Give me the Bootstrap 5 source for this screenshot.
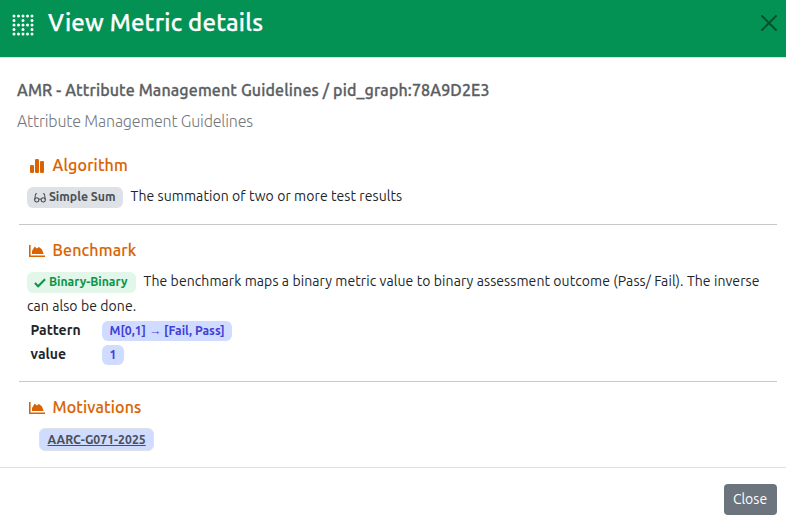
<!DOCTYPE html>
<html lang="en">
<head>
<meta charset="utf-8">
<meta name="viewport" content="width=device-width, initial-scale=1">
<title>View Metric details</title>
<link href="https://cdn.jsdelivr.net/npm/bootstrap@5.3.0/dist/css/bootstrap.min.css" rel="stylesheet">
<style>
body{font-family:Ubuntu,"Noto Sans",sans-serif;font-size:14px;line-height:24px;color:#212529;overflow:hidden}
.dialog{height:523px}
.dialog-head{height:58px;background:#039254;border-bottom:1px solid #dee2e6;padding:5px 8px 0 12px}
.dialog-title{font-size:24px;font-weight:500;line-height:36px;margin-left:14px;letter-spacing:.2px;-webkit-text-stroke:.25px currentColor}
.close-icon{margin-top:10px}
.dialog-body{height:409px;padding:20px 9px 0 17px}
.metric-name{font-size:16px;font-weight:500;line-height:24px;color:#5b5e62;letter-spacing:.135px;-webkit-text-stroke:.3px currentColor}
.metric-label{font-size:16px;font-weight:200;line-height:24px;color:#75787c;margin-top:7px;letter-spacing:-.17px}
.section{margin-left:2px;padding:0 8px}
.section-algorithm{margin-top:20px;height:71px}
.section-benchmark{padding-top:13px;height:156px}
.section-motivations{padding-top:13px}
.section-title{font-size:16px;font-weight:500;line-height:24px;color:#d96302;padding-left:2px;letter-spacing:.16px;-webkit-text-stroke:.12px currentColor}
.section-title svg{margin-right:7.5px;margin-top:2px}
.section-text{margin-top:7px;line-height:25px;letter-spacing:.08px}
.divider{border-top:1px solid #c7c8ca;margin-left:2px}
.tag{display:inline-block;border-radius:6px;font-size:12.25px;font-weight:700;line-height:20px;height:20px;padding:0 7.5px;white-space:nowrap;vertical-align:top;letter-spacing:0}
.tag svg{vertical-align:-3px}
.section-text .tag{margin-top:3px;height:21px}
.tag-gray{background:#dee2e6;color:#495057;padding:0 7px}
.tag-green{background:#e2f6e9;color:#0a9447;padding:0 8.2px 0 7px}
.tag-blue{background:#d0dcff;color:#4340d6;margin-top:2px}
.tag-link{background:#d0dcff;color:#495057;border:1px solid #dee2e6;height:23px;line-height:21px}
.tag-link:hover{color:#343a40}
.motivation-list{padding:9px 0 0 12px}
.term{width:75px;padding-left:3.5px;font-weight:700;margin-top:-1px}
.dialog-foot{height:56px;border-top:1px solid #dee2e6;padding:16px 9px 0}
.btn-close-dialog{width:53px;height:31px;padding:0 1px 0 0;font-size:14px;border-radius:4px;background:#6c757d;color:#fff}
</style>
</head>
<body>
<div class="dialog d-flex flex-column bg-white">
  <header class="dialog-head d-flex align-items-start">
    <svg class="mt-2" width="22" height="24" viewBox="0 0 22 24" fill="none" stroke="#fff" stroke-width="3" stroke-linecap="round"><path d="M2 3h18.1M2 12h18.1M2 21h18.1" stroke-dasharray="0 4.5"/><path d="M2 7.5h18.1M2 16.5h18.1" stroke-dasharray="0 9"/></svg>
    <h1 class="dialog-title text-white mb-0">View Metric details</h1>
    <button type="button" class="btn p-0 border-0 ms-auto lh-1" aria-label="Close dialog"><svg class="close-icon d-block" width="18" height="17" viewBox="0 0 18 17" stroke="#024e2d" stroke-width="1.8" stroke-linecap="round"><path d="m2 1 14 14M16 1 2 15"/></svg></button>
  </header>
  <main class="dialog-body">
    <div class="metric-name">AMR - Attribute Management Guidelines / pid_graph:78A9D2E3</div>
    <div class="metric-label">Attribute Management Guidelines</div>

    <section class="section section-algorithm">
      <h2 class="section-title d-flex align-items-center mb-0"><svg width="16" height="16" viewBox="0 0 16 16" fill="currentColor"><rect x="1" y="7" width="4" height="8" rx="1.2"/><rect x="6" y="1" width="4" height="14" rx="1.2"/><rect x="11" y="3" width="4" height="12" rx="1.2"/></svg>Algorithm</h2>
      <div class="section-text"><span class="tag tag-gray me-2"><svg width="12" height="13" viewBox="0 0 13 13" fill="none" stroke="currentColor" stroke-width="1.1"><circle cx="3" cy="9" r="2.3"/><circle cx="10" cy="9" r="2.3"/><path d="M5.2 8.5q1.3-.9 2.6 0M.8 8.8 1.6 3q.3-.9 1.7-.6M12.2 8.8 11.4 3q-.3-.9-1.7-.6"/></svg> Simple Sum</span>The summation of two or more test results</div>
    </section>
    <div class="divider"></div>

    <section class="section section-benchmark">
      <h2 class="section-title d-flex align-items-center mb-0"><svg width="16" height="16" viewBox="0 0 16 16" fill="currentColor"><path d="M0 2h1.6v10.4H16V14H0zM3 11V8l2.7-4.5 2 2L10 4l3 2.5 1.6 4.5z"/></svg>Benchmark</h2>
      <div class="section-text"><span class="tag tag-green me-2"><svg width="12" height="13" viewBox="0 0 13 13" fill="none" stroke="currentColor" stroke-width="2.2"><path d="m1 7 3.5 3.5L12 3"/></svg> Binary-Binary</span>The benchmark maps a binary metric value to binary assessment outcome (Pass/ Fail). The inverse can also be done.</div>
      <div class="d-flex"><div class="term">Pattern</div><div><span class="tag tag-blue">M[0,1] → [Fail, Pass]</span></div></div>
      <div class="d-flex"><div class="term">value</div><div><span class="tag tag-blue">1</span></div></div>
    </section>
    <div class="divider"></div>

    <section class="section section-motivations">
      <h2 class="section-title d-flex align-items-center mb-0"><svg width="16" height="16" viewBox="0 0 16 16" fill="currentColor"><path d="M0 2h1.6v10.4H16V14H0zM3 11V8l2.7-4.5 2 2L10 4l3 2.5 1.6 4.5z"/></svg>Motivations</h2>
      <div class="motivation-list"><a href="#" class="tag tag-link">AARC-G071-2025</a></div>
    </section>
  </main>
  <footer class="dialog-foot d-flex justify-content-end align-items-start">
    <button type="button" class="btn btn-close-dialog">Close</button>
  </footer>
</div>
</body>
</html>
